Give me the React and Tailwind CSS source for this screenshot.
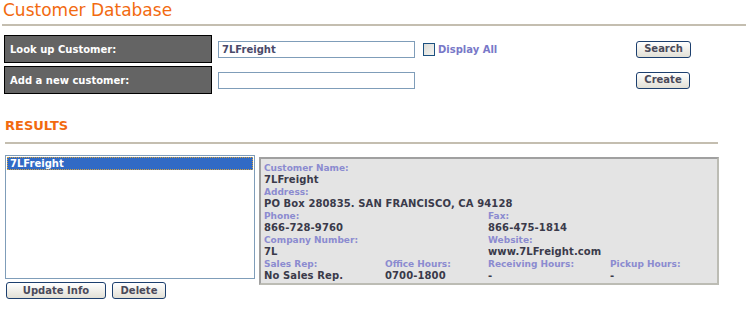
import React from 'react';

const font = { fontFamily: '"DejaVu Sans", Verdana, sans-serif' };

const Label = ({ children }) => (
  <div className="text-[9px] font-bold leading-[12px] text-[#8b8bd0]">{children}</div>
);
const Value = ({ children }) => (
  <div className="text-[10px] font-bold leading-[12px] text-[#3a3a4a] tracking-[0.1px]">{children}</div>
);

const XpButton = ({ children, className = '' }) => (
  <button
    className={`h-[17px] rounded-[3px] border border-[#1c3f6e] bg-gradient-to-b from-white to-[#e2e0d6] text-[10px] font-bold text-[#4a4a5a] leading-none ${className}`}
  >
    {children}
  </button>
);

export default function App() {
  return (
    <div className="w-[746px] h-[314px] bg-white overflow-hidden" style={font}>
      {/* 제목 */}
      <div className="pl-[3px] h-[24px] text-[17px] leading-[21px] text-[#f26a10]">Customer Database</div>
      <div className="ml-[2px] border-t-2 border-[#c4beb0]" />

      {/* 검색 / 생성 폼 */}
      <div className="mt-[9px] ml-[4px] flex flex-col gap-[3px]">
        <div className="flex items-center h-[28px]">
          <div className="w-[208px] h-[28px] bg-[#646464] border border-black flex items-center pl-[5px] text-[10px] font-bold text-white">
            Look up Customer:
          </div>
          <div className="w-[424px] pl-[6px] flex items-center">
            <input
              readOnly
              value="7LFreight"
              className="w-[197px] h-[17px] border border-[#7f9db9] px-[3px] text-[10px] font-bold text-[#4a4a6a] outline-none"
            />
            <span className="ml-[8px] w-[12px] h-[13px] border border-[#1c5180] bg-gradient-to-br from-[#dcdcd8] to-[#f4f4f0]" />
            <span className="ml-[3px] text-[10px] font-bold text-[#7878c8]">Display All</span>
          </div>
          <XpButton className="w-[55px]">Search</XpButton>
        </div>
        <div className="flex items-center h-[28px]">
          <div className="w-[208px] h-[28px] bg-[#646464] border border-black flex items-center pl-[5px] text-[10px] font-bold text-white">
            Add a new customer:
          </div>
          <div className="w-[424px] pl-[6px] flex items-center">
            <input
              readOnly
              value=""
              className="w-[197px] h-[17px] border border-[#7f9db9] px-[3px] text-[10px] outline-none"
            />
          </div>
          <XpButton className="w-[54px]">Create</XpButton>
        </div>
      </div>

      {/* 결과 */}
      <div className="mt-[24px] ml-[5px] text-[13px] font-bold leading-[16px] text-[#f26a10]">RESULTS</div>
      <div className="mt-[8px] ml-[5px] w-[713px] border-t-2 border-[#c4beb0]" />

      <div className="mt-[11px] ml-[5px] flex items-start">
        <div className="flex flex-col">
          <div className="w-[250px] h-[124px] border border-[#7f9db9] p-[1px]">
            <div className="h-[13px] bg-[#316ac5] outline-1 outline-dotted outline-[#d0a040] -outline-offset-1 pl-[3px] text-[10px] font-bold leading-[13px] text-white">
              7LFreight
            </div>
          </div>
          <div className="mt-[3px] flex gap-[6px] pl-[1px]">
            <XpButton className="w-[100px]">Update Info</XpButton>
            <XpButton className="w-[54px]">Delete</XpButton>
          </div>
        </div>

        <div className="ml-[4px] mt-[2px] w-[460px] h-[128px] bg-[#e4e4e4] border-2 border-t-[#a0a0a0] border-l-[#a0a0a0] border-r-[#bcbcb4] border-b-[#bcbcb4] pl-[3px] pt-[3px]">
          <div className="grid grid-cols-[121px_103px_122px_1fr]">
            <div className="col-span-4"><Label>Customer Name:</Label><Value>7LFreight</Value></div>
            <div className="col-span-4"><Label>Address:</Label><Value>PO Box 280835. SAN FRANCISCO, CA 94128</Value></div>
            <div className="col-span-2"><Label>Phone:</Label><Value>866-728-9760</Value></div>
            <div className="col-span-2"><Label>Fax:</Label><Value>866-475-1814</Value></div>
            <div className="col-span-2"><Label>Company Number:</Label><Value>7L</Value></div>
            <div className="col-span-2"><Label>Website:</Label><Value>www.7LFreight.com</Value></div>
            <div><Label>Sales Rep:</Label><Value>No Sales Rep.</Value></div>
            <div><Label>Office Hours:</Label><Value>0700-1800</Value></div>
            <div><Label>Receiving Hours:</Label><Value>-</Value></div>
            <div><Label>Pickup Hours:</Label><Value>-</Value></div>
          </div>
        </div>
      </div>
    </div>
  );
}
